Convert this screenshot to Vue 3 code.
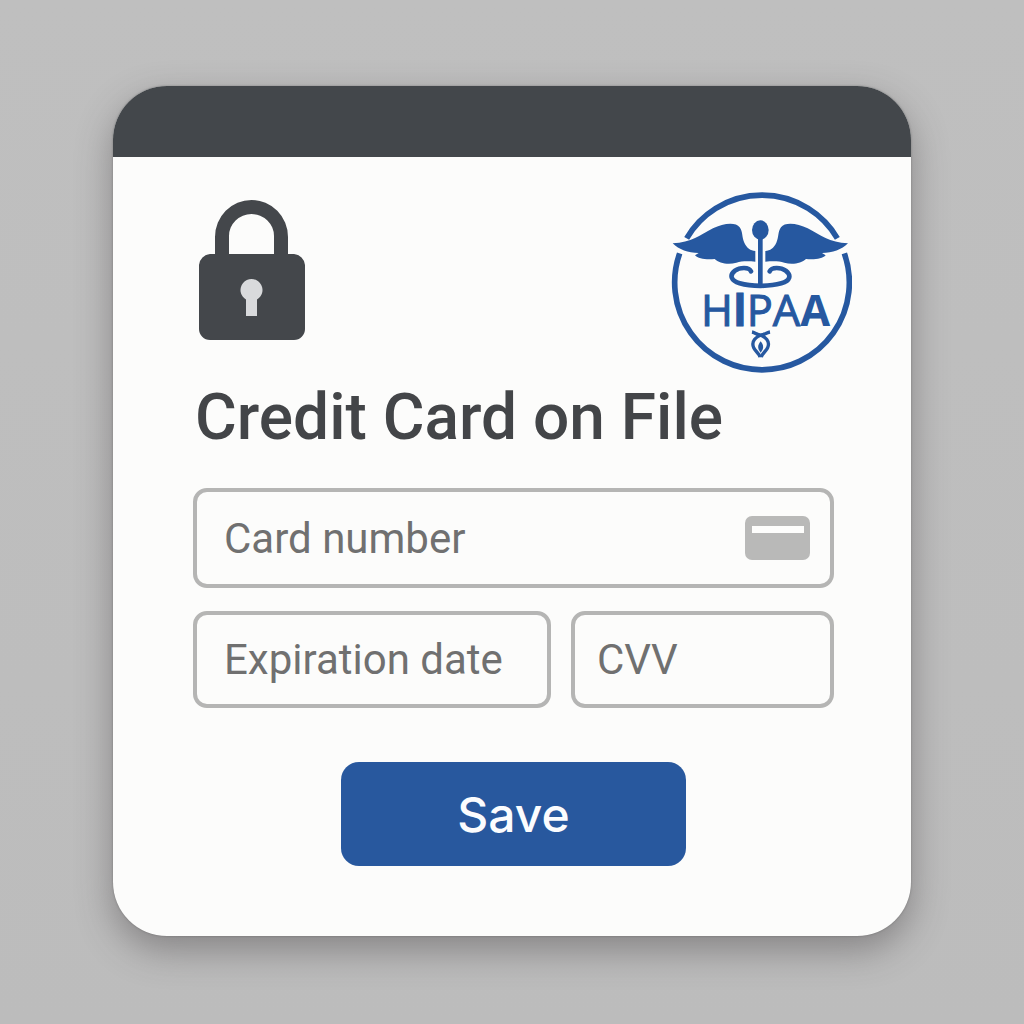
<template>
  <main class="page">
    <section class="card" aria-labelledby="card-title">
      <div class="card__bar"></div>

      <div class="card__body">
        <div class="card__badges">
          <svg class="lock" viewBox="0 0 108 142" aria-hidden="true">
            <path
              class="lock__shape"
              d="M17 55V38a36.500 37 0 0 1 73 0v17h6a12 12 0 0 1 11 11v64a11 11 0 0 1-11 11H12a11 11 0 0 1-11-11V66a12 12 0 0 1 11-11zM31 55h45V37a22.500 22 0 0 0-45 0z"
            />
            <path
              class="lock__hole"
              d="M48 117V100.500a11 11 0 1 1 11 0V117z"
            />
          </svg>

          <svg class="hipaa" viewBox="34 33 543 546" role="img" aria-label="HIPAA">
            <g class="hipaa__ring">
              <path d="M81 175A262 262 0 0 1 533 175" />
              <path d="M554 220A262 262 0 1 1 60 220" />
            </g>
            <g class="hipaa__fill">
              <path :d="wing" />
              <path :d="wing" transform="translate(604 0) scale(-1 1)" />
              <ellipse cx="302" cy="150" rx="25" ry="29" />
              <rect x="295" y="174" width="14" height="140" />
              <path d="M303 484C293 496 293 506 303 518C313 506 313 496 303 484Z" />
            </g>
            <path
              class="hipaa__snake"
              d="M274 274C268 260 240 262 226 272C208 286 214 302 240 310C275 320 330 320 365 310C392 302 396 286 378 272C364 262 336 260 330 274"
            />
            <g class="hipaa__tail">
              <path d="M277 456C288 458 293 466 303 466C313 466 319 458 331 456" />
              <path d="M314 462C286 470 274 484 282 503C286 514 299 519 301 532" />
              <path d="M292 462C320 470 332 484 324 503C320 514 307 519 305 532" />
            </g>
            <text class="hipaa__text" x="124" y="438">
              <tspan>H</tspan><tspan class="hipaa__text--plain">I</tspan><tspan class="hipaa__text--medium">P</tspan><tspan>A</tspan><tspan class="hipaa__text--bold">A</tspan>
            </text>
          </svg>
        </div>

        <form class="form" @submit.prevent>
          <h1 id="card-title" class="form__title">Credit Card on File</h1>

          <div class="field field--number">
            <input
              v-model="number"
              class="field__input"
              type="text"
              inputmode="numeric"
              placeholder="Card number"
              aria-label="Card number"
            />
            <svg class="field__icon" viewBox="0 0 65 44" aria-hidden="true">
              <rect width="65" height="44" rx="7" fill="#b9b9b8" />
              <rect x="7" y="10" width="52" height="7" fill="#fdfdfc" />
            </svg>
          </div>

          <div class="form__row">
            <div class="field">
              <input
                v-model="expiry"
                class="field__input"
                type="text"
                placeholder="Expiration date"
                aria-label="Expiration date"
              />
            </div>
            <div class="field field--cvv">
              <input
                v-model="cvv"
                class="field__input"
                type="text"
                inputmode="numeric"
                placeholder="CVV"
                aria-label="CVV"
              />
            </div>
          </div>

          <button class="form__save" type="submit">Save</button>
        </form>
      </div>
    </section>
  </main>
</template>

<script setup>
import { ref } from 'vue';

const number = ref('');
const expiry = ref('');
const cvv = ref('');

// Left wing; the right one is the same path mirrored around the staff
const wing =
  'M39 190C95 188 122 165 160 145C190 130 228 125 240 142C250 155 246 172 254 188C262 205 272 211 287 213V245C260 243 245 244 230 248C205 256 178 249 165 237C140 240 115 236 106 226L117 219C85 219 58 209 39 190Z';
</script>

<style>
body {
  margin: 0;
  background: #bebebe;
}
</style>

<style scoped>
.page {
  box-sizing: border-box;
  min-height: 100vh;
  padding: 86px 24px 88px;
  background: linear-gradient(#bfbfbf, #bcbcbc);
  font-family: Roboto, Inter, sans-serif;
}

.card {
  max-width: 798px;
  margin: 0 auto;
  border-radius: 54px;
  overflow: hidden;
  background: #fcfcfb;
  box-shadow:
    0 0 2px rgba(70, 70, 70, 0.5),
    0 14px 36px rgba(60, 56, 58, 0.42);
}

.card__bar {
  height: 71px;
  background: #43474b;
}

.card__body {
  padding: 34px 59px 70px 80px;
}

.card__badges {
  display: flex;
  justify-content: space-between;
  align-items: flex-start;
}

.lock {
  width: 108px;
  height: 142px;
  margin: 8px 0 0 5px;
}

.lock__shape {
  fill: #44474b;
  fill-rule: evenodd;
}

.lock__hole {
  fill: #d9dadc;
}

.hipaa {
  width: 181px;
  height: 182px;
}

.hipaa__fill,
.hipaa__text {
  fill: #2658a0;
}

.hipaa__ring,
.hipaa__snake,
.hipaa__tail {
  fill: none;
  stroke: #2658a0;
}

.hipaa__ring {
  stroke-width: 17;
}

.hipaa__snake {
  stroke-width: 14;
  stroke-linecap: round;
}

.hipaa__tail {
  stroke-width: 10;
}

.hipaa__text {
  font-family: 'Open Sans', 'Noto Sans', sans-serif;
  font-size: 130px;
  font-weight: 500;
  stroke: #2658a0;
  stroke-width: 3;
}

.hipaa__text--plain {
  font-family: Lato, sans-serif;
  font-size: 140px;
  font-weight: 700;
}

.hipaa__text--medium {
  font-weight: 500;
}

.hipaa__text--bold {
  font-weight: 700;
  stroke-width: 0;
}

.form {
  display: flex;
  flex-direction: column;
  margin-right: 18px;
}

.form__title {
  margin: 5px 0 30px;
  padding-left: 2px;
  color: #434548;
  font-size: 64px;
  font-weight: 500;
  line-height: 80px;
}

.form__row {
  display: grid;
  grid-template-columns: 358fr 263fr;
  gap: 20px;
  margin-top: 23px;
}

.field {
  box-sizing: border-box;
  display: flex;
  align-items: center;
  min-width: 0;
  height: 97px;
  padding: 0 20px 0 27px;
  border: 4px solid #b5b5b4;
  border-radius: 14px;
}

.field--number {
  height: 100px;
}

.field--cvv {
  padding-left: 22px;
}

.field__input {
  flex: 1;
  min-width: 0;
  height: 100%;
  padding: 0;
  border: 0;
  outline: 0;
  background: transparent;
  color: #434548;
  font: inherit;
  font-size: 42px;
}

.field__input::placeholder {
  color: #707070;
  opacity: 1;
}

.field__icon {
  width: 65px;
  height: 44px;
}

.form__save {
  align-self: center;
  width: 345px;
  height: 104px;
  margin-top: 54px;
  border: 0;
  border-radius: 18px;
  background: #28589e;
  color: #fbfcfe;
  font-family: Inter, sans-serif;
  font-size: 48px;
  font-weight: 500;
  cursor: pointer;
}
</style>
